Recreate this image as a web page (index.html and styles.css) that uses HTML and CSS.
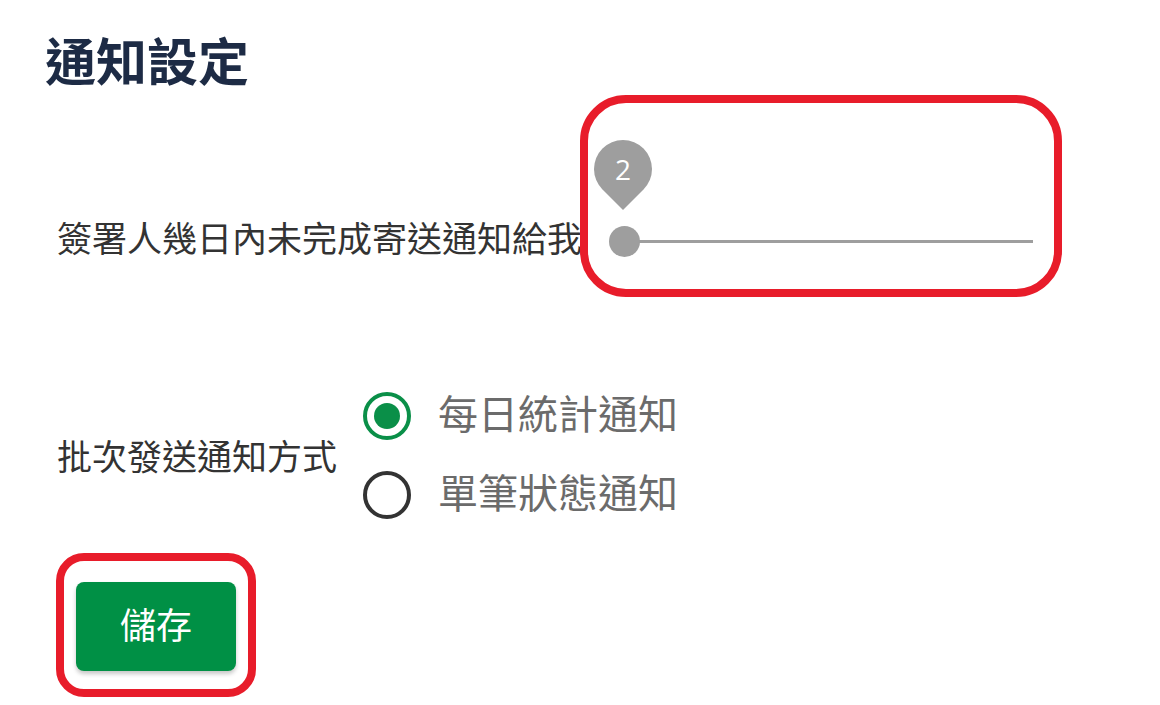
FILE: index.html
```html
<!DOCTYPE html>
<html lang="zh-Hant">
<head>
<meta charset="utf-8">
<title>通知設定</title>
<link rel="stylesheet" href="styles.css">
</head>
<body>
<div class="page">
  <h1 class="title">通知設定</h1>

  <div class="row row-slider">
    <div class="label label-slider">簽署人幾日內未完成寄送通知給我</div>
    <div class="highlight highlight-slider">
      <div class="slider">
        <div class="track"></div>
        <div class="thumb"></div>
        <div class="bubble"><span class="bubble-text">2</span></div>
      </div>
    </div>
  </div>

  <div class="row row-radio">
    <div class="label">批次發送通知方式</div>
    <div class="radio-group">
      <label class="radio-option">
        <span class="radio radio-checked"><span class="radio-dot"></span></span>
        <span class="radio-text">每日統計通知</span>
      </label>
      <label class="radio-option">
        <span class="radio"></span>
        <span class="radio-text">單筆狀態通知</span>
      </label>
    </div>
  </div>

  <div class="highlight highlight-button">
    <button class="save-btn" type="button">儲存</button>
  </div>
</div>
</body>
</html>
```

FILE: styles.css
```css
* { box-sizing: border-box; }

html, body {
  margin: 0;
  padding: 0;
  background: #ffffff;
}

body {
  font-family: "Noto Sans CJK TC", "Noto Sans", sans-serif;
  color: #333333;
}

.page {
  padding: 29px 0 0 45px;
}

.title {
  margin: 0;
  font-size: 51px;
  line-height: 60px;
  font-weight: 700;
  color: #1d2b45;
}

.row {
  display: flex;
  padding-left: 12px;
}

.row-slider {
  margin-top: 6px;
  align-items: flex-start;
}

.label {
  font-size: 35px;
  line-height: 40px;
  color: #333333;
  white-space: nowrap;
}

.label-slider {
  margin-top: 122px;
}

.highlight {
  border: 8px solid #e81c2a;
}

.highlight-slider {
  width: 482px;
  height: 202px;
  border-radius: 46px;
  padding: 123px 21px 0 21px;
  margin-left: -2px;
}

.slider {
  position: relative;
  height: 30px;
}

.track {
  position: absolute;
  left: 15px;
  right: 0;
  top: 14px;
  height: 3px;
  background: #9e9e9e;
}

.thumb {
  position: absolute;
  left: 0;
  top: 0;
  width: 31px;
  height: 31px;
  border-radius: 50%;
  background: #9e9e9e;
}

.bubble {
  position: absolute;
  left: -15px;
  top: -86px;
  width: 58px;
  height: 58px;
  border-radius: 50% 50% 50% 0;
  background: #9e9e9e;
  transform: rotate(-45deg);
  display: flex;
  align-items: center;
  justify-content: center;
}

.bubble-text {
  transform: rotate(45deg);
  color: #ffffff;
  font-family: "Open Sans", "Noto Sans", sans-serif;
  font-size: 28px;
  line-height: 1;
}

.row-radio {
  margin-top: 79px;
  align-items: center;
}

.radio-group {
  display: flex;
  flex-direction: column;
  margin-left: 26px;
}

.radio-option {
  display: flex;
  align-items: center;
  height: 79px;
}

.radio {
  width: 48px;
  height: 48px;
  border-radius: 50%;
  border: 4px solid #333333;
  display: flex;
  align-items: center;
  justify-content: center;
  flex: none;
}

.radio-checked {
  border-color: #0a8f48;
}

.radio-dot {
  width: 26px;
  height: 26px;
  border-radius: 50%;
  background: #0a8f48;
}

.radio-text {
  margin-left: 27px;
  margin-bottom: 7px;
  font-size: 40px;
  line-height: 48px;
  color: #6b6b6b;
}

.highlight-button {
  display: inline-block;
  margin: 19px 0 0 11px;
  width: 200px;
  height: 144px;
  border-radius: 28px;
  padding: 21px 12px 18px 12px;
}

.save-btn {
  display: block;
  width: 160px;
  height: 89px;
  border: none;
  border-radius: 8px;
  background: #009045;
  color: #ffffff;
  font-family: "Noto Sans CJK TC", sans-serif;
  font-size: 36px;
  line-height: 1;
  padding: 0 0 7px 0;
  box-shadow: 0 3px 4px rgba(0, 0, 0, 0.22);
}
```
